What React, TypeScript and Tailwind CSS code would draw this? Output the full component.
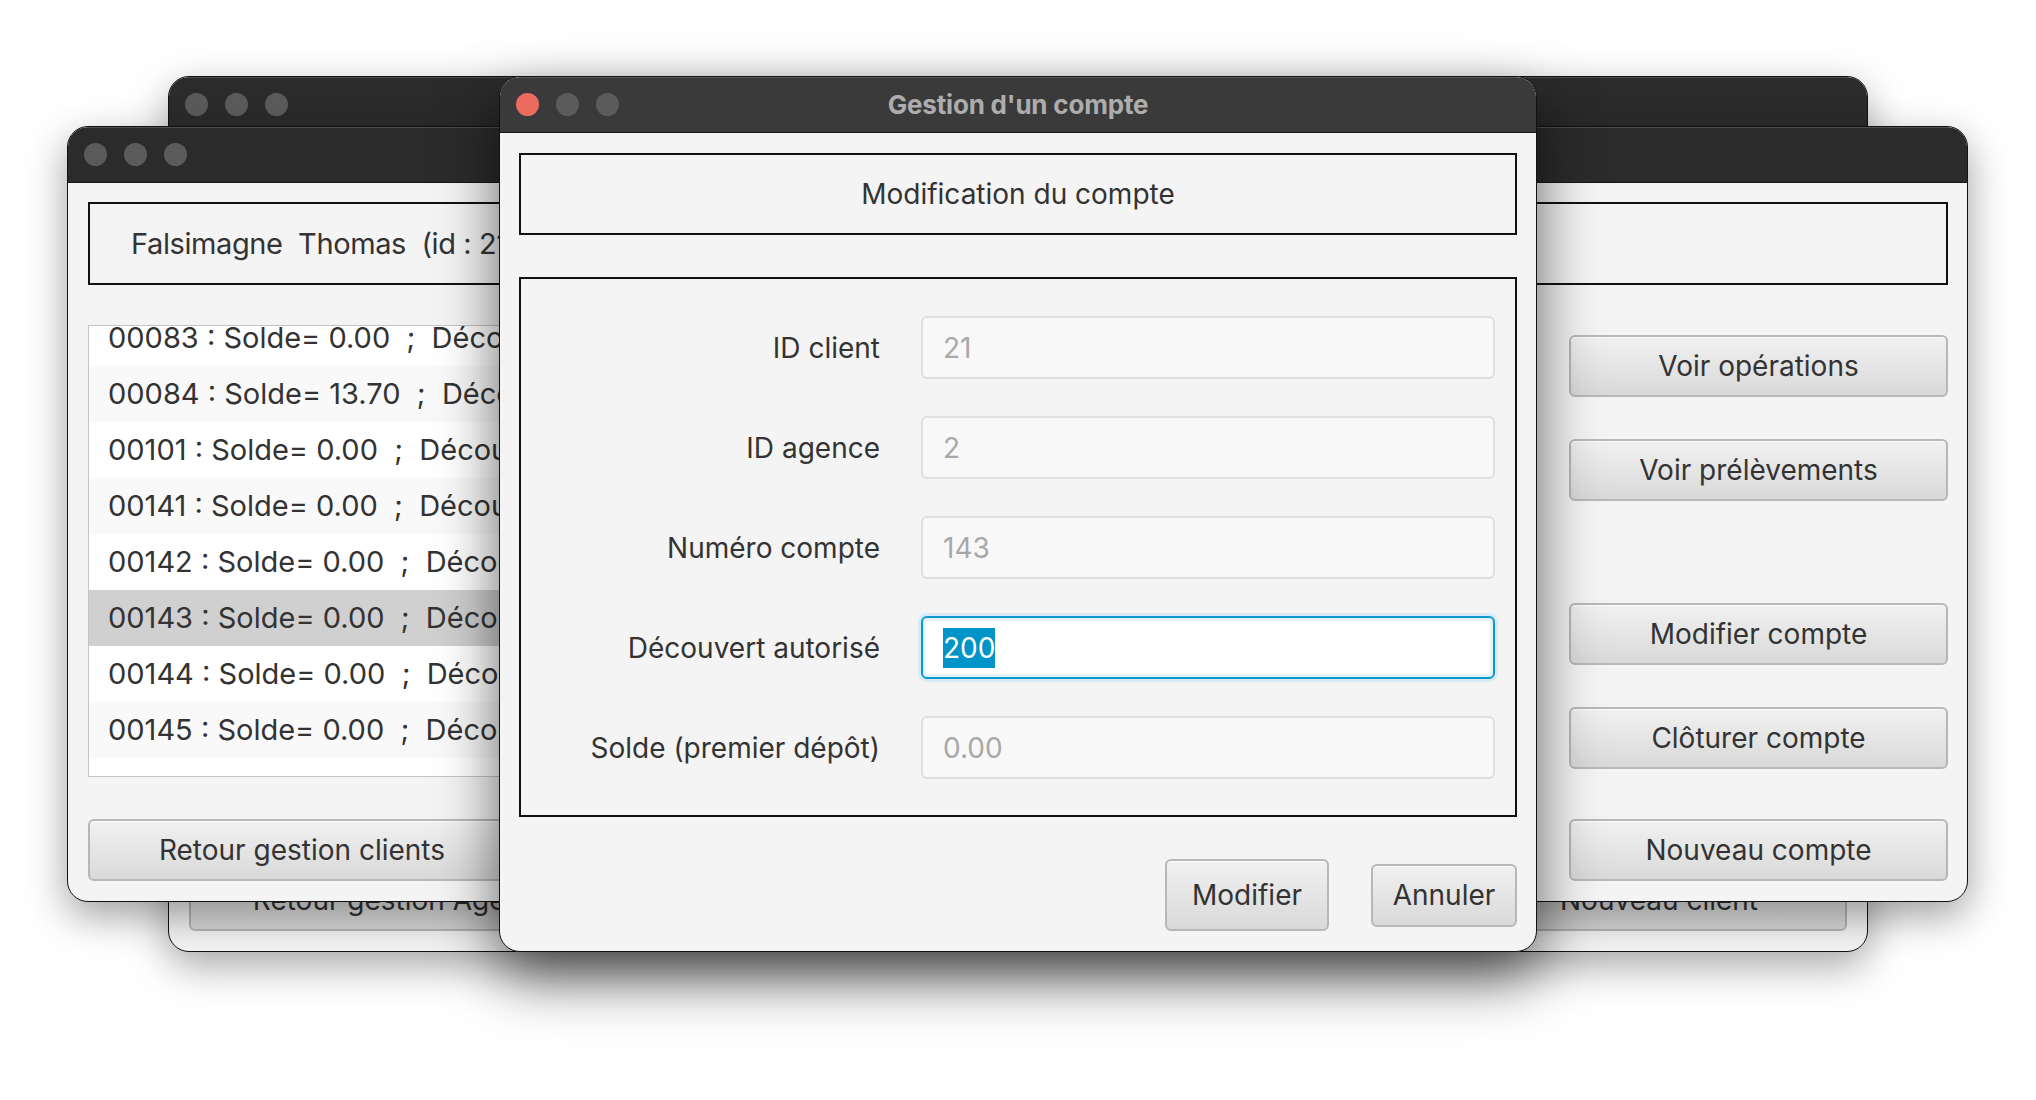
import React from "react";

function TitleBar({ active, title }: { active?: boolean; title?: string }) {
  return (
    <div
      className={`grid h-[56px] shrink-0 grid-cols-[1fr_auto_1fr] items-center border-b border-[#161616] shadow-[inset_0_1px_0_rgba(255,255,255,0.16)] ${
        active ? "bg-[#3a3a3a]" : "bg-[#2b2b2b]"
      }`}
    >
      <div className="flex gap-[17px] pl-[16px]">
        <span className={`h-[23px] w-[23px] rounded-full ${active ? "bg-[#ed6a5e]" : "bg-[#5a5a5a]"}`} />
        <span className="h-[23px] w-[23px] rounded-full bg-[#5b5b5b]" />
        <span className="h-[23px] w-[23px] rounded-full bg-[#5b5b5b]" />
      </div>
      <div className="text-[26px] font-bold tracking-[-0.2px] text-[#adadad]">{title}</div>
      <div />
    </div>
  );
}

function Btn({ children, className }: { children: React.ReactNode; className: string }) {
  return (
    <div
      className={`flex shrink-0 items-center justify-center rounded-[6px] border-2 border-[#b7b7b7] bg-linear-to-b from-[#f1f1f1] to-[#d9d9d9] text-[28px] text-[#333333] shadow-[inset_0_1px_0_#fbfbfb] ${className}`}
    >
      {children}
    </div>
  );
}

const rows = [
  { id: "00083", solde: "0.00" },
  { id: "00084", solde: "13.70" },
  { id: "00101", solde: "0.00" },
  { id: "00141", solde: "0.00" },
  { id: "00142", solde: "0.00" },
  { id: "00143", solde: "0.00", selected: true },
  { id: "00144", solde: "0.00" },
  { id: "00145", solde: "0.00" },
];

const fields = [
  { label: "ID client", value: "21" },
  { label: "ID agence", value: "2" },
  { label: "Numéro compte", value: "143" },
  { label: "Découvert autorisé", value: "200", focus: true },
  { label: "Solde (premier dépôt)", value: "0.00" },
];

export default function App() {
  return (
    <div className="relative h-[1100px] w-[2036px] overflow-hidden bg-white font-['Inter',sans-serif] text-[#333333]">
      {/* Back window */}
      <div className="absolute left-[168px] top-[76px] flex h-[876px] w-[1700px] flex-col overflow-hidden rounded-[21px] border border-[#111111] bg-[#f4f4f4] shadow-[0_14px_40px_rgba(0,0,0,0.35)]">
        <TitleBar />
        <div className="flex flex-1 flex-col justify-end px-[20px] pb-[20px]">
          <div className="flex justify-between">
            <Btn className="h-[62px] w-[444px]">Retour gestion Agences</Btn>
            <Btn className="h-[62px] w-[376px]">Nouveau client</Btn>
          </div>
        </div>
      </div>

      {/* Middle window */}
      <div className="absolute left-[67px] top-[126px] flex h-[776px] w-[1901px] flex-col overflow-hidden rounded-[21px] border border-[#111111] bg-[#f4f4f4] shadow-[0_14px_40px_rgba(0,0,0,0.38)]">
        <TitleBar />
        <div className="flex flex-1 flex-col pl-[20px] pr-[19px] pt-[19px]">
          <div className="flex h-[83px] shrink-0 items-center border-2 border-[#111111] pl-[41px] text-[29px] tracking-[-0.4px]">
            <span className="whitespace-pre">Falsimagne  Thomas  (id : 21)</span>
          </div>
          <div className="mt-[40px] flex justify-between">
            <div className="flex w-[428px] flex-col">
              <div className="h-[452px] overflow-hidden border border-[#c4c4c4] bg-white">
                <div className="-mt-[16px] flex flex-col">
                  {rows.map((r, i) => (
                    <div
                      key={r.id}
                      className={`flex h-[56px] shrink-0 items-center whitespace-pre pl-[19px] text-[29px] ${
                        r.selected ? "bg-[#d0d0d0]" : i % 2 === 1 ? "bg-[#f9f9f9]" : "bg-white"
                      }`}
                    >
                      {`${r.id} : Solde= ${r.solde}  ;  Découvert autorisé= 200.00`}
                    </div>
                  ))}
                </div>
              </div>
              <Btn className="mt-[42px] h-[62px] w-full">Retour gestion clients</Btn>
            </div>
            <div className="flex w-[379px] flex-col pt-[10px]">
              <Btn className="h-[62px] w-full">Voir opérations</Btn>
              <Btn className="mt-[42px] h-[62px] w-full">Voir prélèvements</Btn>
              <Btn className="mt-[102px] h-[62px] w-full">Modifier compte</Btn>
              <Btn className="mt-[42px] h-[62px] w-full">Clôturer compte</Btn>
              <Btn className="mt-[50px] h-[62px] w-full">Nouveau compte</Btn>
            </div>
          </div>
        </div>
      </div>

      {/* Dialog */}
      <div className="absolute left-[499px] top-[76px] flex h-[876px] w-[1038px] flex-col overflow-hidden rounded-[21px] border border-[#111111] bg-[#f4f4f4] shadow-[0_26px_60px_rgba(0,0,0,0.6)]">
        <TitleBar active title="Gestion d'un compte" />
        <div className="flex flex-1 flex-col px-[19px] pt-[20px]">
          <div className="flex h-[82px] shrink-0 items-center justify-center border-2 border-[#111111] text-[28px]">
            Modification du compte
          </div>
          <div className="mt-[42px] flex h-[540px] shrink-0 flex-col gap-[37px] border-2 border-[#111111] pr-[20px] pt-[37px]">
            {fields.map((f) => (
              <div key={f.label} className="flex h-[63px] items-center">
                <div className="w-[359px] shrink-0 text-right text-[28px]">{f.label}</div>
                {f.focus ? (
                  <div className="ml-[41px] flex h-full flex-1 items-center rounded-[6px] border-2 border-[#0a98cf] bg-white pl-[20px] shadow-[0_0_0_3px_#d6ebf5,inset_0_0_0_3px_#e4f2f9]">
                    <span className="bg-[#0094c8] text-[28px] leading-[40px] text-white">{f.value}</span>
                  </div>
                ) : (
                  <div className="ml-[41px] flex h-full flex-1 items-center rounded-[6px] border-2 border-[#dfdfdf] bg-[#f8f8f8] pl-[20px] text-[28px] text-[#a8a8a8]">
                    {f.value}
                  </div>
                )}
              </div>
            ))}
          </div>
          <div className="mt-[42px] flex items-center justify-end gap-[42px]">
            <Btn className="h-[72px] w-[164px]">Modifier</Btn>
            <Btn className="h-[63px] w-[146px]">Annuler</Btn>
          </div>
        </div>
      </div>
    </div>
  );
}
